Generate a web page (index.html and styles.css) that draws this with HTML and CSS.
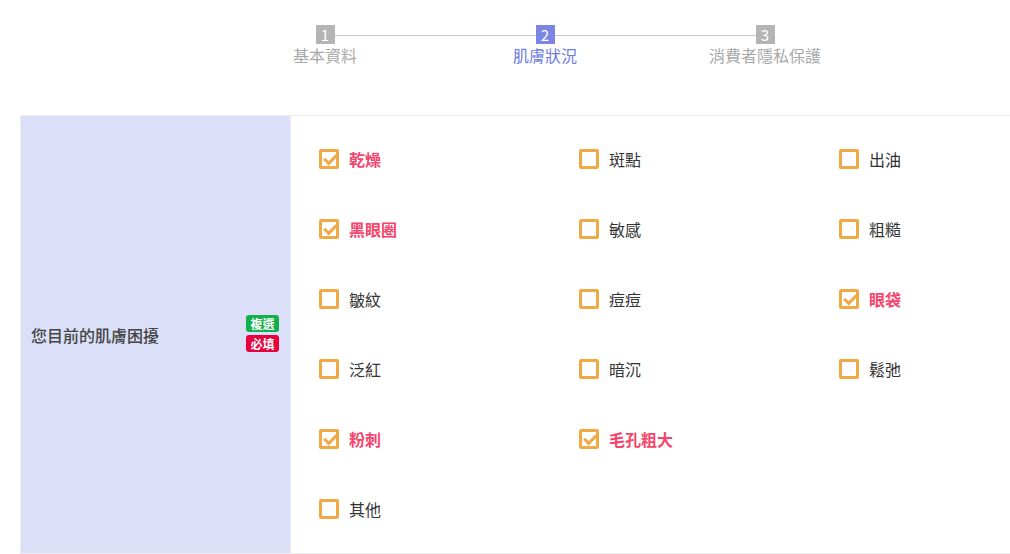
FILE: index.html
```html
<!DOCTYPE html>
<html lang="zh-TW">
  <head>
    <meta charset="UTF-8" />
    <title>肌膚狀況</title>
    <link rel="stylesheet" href="styles.css">
  </head>
  <body>
    <!-- 步驟 -->
    <div class="steps">
      <div class="step">
        <span class="step-num">1</span>
        <span class="step-name">基本資料</span>
      </div>
      <div class="step active">
        <span class="step-num">2</span>
        <span class="step-name">肌膚狀況</span>
      </div>
      <div class="step">
        <span class="step-num">3</span>
        <span class="step-name">消費者隱私保護</span>
      </div>
    </div>

    <!-- 表單 -->
    <div class="form-row">
      <div class="form-label">
        <span>您目前的肌膚困擾</span>
        <div class="tags">
          <span class="tag tag-multi">複選</span>
          <span class="tag tag-required">必填</span>
        </div>
      </div>
      <div class="form-options">
        <label class="opt checked"><span class="box"></span>乾燥</label>
        <label class="opt"><span class="box"></span>斑點</label>
        <label class="opt"><span class="box"></span>出油</label>
        <label class="opt checked"><span class="box"></span>黑眼圈</label>
        <label class="opt"><span class="box"></span>敏感</label>
        <label class="opt"><span class="box"></span>粗糙</label>
        <label class="opt"><span class="box"></span>皺紋</label>
        <label class="opt"><span class="box"></span>痘痘</label>
        <label class="opt checked"><span class="box"></span>眼袋</label>
        <label class="opt"><span class="box"></span>泛紅</label>
        <label class="opt"><span class="box"></span>暗沉</label>
        <label class="opt"><span class="box"></span>鬆弛</label>
        <label class="opt checked"><span class="box"></span>粉刺</label>
        <label class="opt checked"><span class="box"></span>毛孔粗大</label>
        <label class="opt empty"></label>
        <label class="opt"><span class="box"></span>其他</label>
      </div>
    </div>
  </body>
</html>
```
FILE: styles.css
```css
* {
  box-sizing: border-box;
}
body {
  font-family: "Noto Sans CJK TC", "Noto Sans", sans-serif;
  background-color: #fff;
  color: #333;
  margin: 0;
  padding: 0;
}
.steps {
  display: flex;
  justify-content: center;
  padding-top: 25px;
  padding-left: 80px;
  height: 115px;
}
.step {
  position: relative;
  width: 220px;
  display: flex;
  flex-direction: column;
  align-items: center;
}
.step + .step::before {
  content: "";
  position: absolute;
  top: 10px;
  right: 50%;
  width: 220px;
  height: 1px;
  background-color: #c8c8c8;
  z-index: 0;
}
.step-num {
  position: relative;
  z-index: 1;
  width: 19px;
  height: 19px;
  line-height: 19px;
  text-align: center;
  background-color: #b4b4b4;
  color: #fff;
  font-size: 15px;
}
.step-name {
  font-size: 16px;
  line-height: 23px;
  color: #a8a8a8;
}
.step.active .step-num {
  background-color: #7b86e4;
}
.step.active .step-name {
  color: #6f7be0;
}
.form-row {
  display: flex;
  margin-left: 20px;
  border-top: 1px solid #ececec;
  border-bottom: 1px solid #ececec;
}
.form-label {
  width: 271px;
  flex-shrink: 0;
  background-color: #dbdff8;
  border-left: 1px solid #ececec;
  border-right: 1px solid #ececec;
  padding: 0 10px;
  display: flex;
  align-items: center;
  justify-content: space-between;
  font-size: 16px;
  font-weight: 500;
  color: #444;
}
.tags {
  display: flex;
  flex-direction: column;
  gap: 3px;
  margin-right: 1px;
  margin-top: -3px;
}
.tag {
  width: 33px;
  text-align: center;
  font-size: 12px;
  font-weight: bold;
  color: #fff;
  line-height: 17px;
  border-radius: 3px;
}
.tag-multi {
  background-color: #12b04a;
}
.tag-required {
  background-color: #e6003c;
}
.form-options {
  flex: 1;
  display: grid;
  grid-template-columns: 260px 260px 1fr;
  padding: 8px 0 9px 28px;
}
.opt {
  height: 70px;
  display: flex;
  align-items: center;
  font-size: 16px;
  color: #333;
}
.box {
  position: relative;
  width: 20px;
  height: 20px;
  border: 3px solid #f0a945;
  border-radius: 2px;
  margin-right: 10px;
}
.opt.checked {
  color: #f5456c;
  font-weight: bold;
}
.opt.checked .box::after {
  content: "";
  position: absolute;
  left: 1.5px;
  top: 2px;
  width: 10px;
  height: 5px;
  border-left: 3px solid #f0a945;
  border-bottom: 3px solid #f0a945;
  transform: rotate(-45deg);
}
```
